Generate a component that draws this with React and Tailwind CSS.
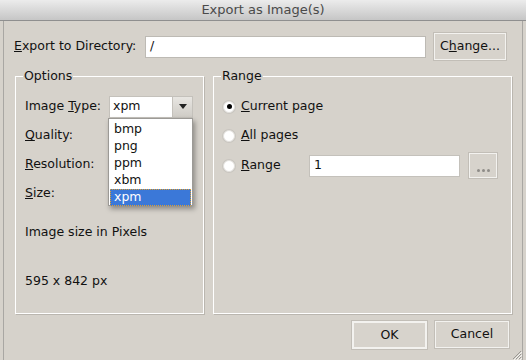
import React from 'react';

const btn =
  'flex items-center justify-center border border-[#f3f2ef] bg-[#d7d3cc] shadow-[0_0_0_1px_#c2beb7]';

function Radio({ checked, children }) {
  return (
    <div className="flex items-center h-[29px]">
      <span className="w-[12px] h-[12px] rounded-full bg-white border border-[#e3e1dd] shadow-[0_0_0_1px_#c9c6c0] flex items-center justify-center">
        {checked && <span className="w-[5px] h-[5px] rounded-full bg-black" />}
      </span>
      <span className="ml-[6px]">{children}</span>
    </div>
  );
}

export default function App() {
  return (
    <div
      className="w-[526px] h-[360px] overflow-hidden bg-[#d6d2cb] flex flex-col text-[12.5px] text-[#111]"
      style={{ fontFamily: '"DejaVu Sans", Verdana, sans-serif' }}
    >
      <div className="h-[21px] shrink-0 flex items-center justify-center bg-gradient-to-b from-[#ececec] to-[#c6c6c6] border-b border-[#8f8f8f] text-[13px] text-[#4a4a4a]">
        Export as Image(s)
      </div>

      <div className="flex-1 mx-[3px] border-x border-[#a9a7a3] flex flex-col relative">
        {/* directory row */}
        <div className="flex items-center mt-[12px] pl-[10px] pr-[16px] h-[27px]">
          <span className="w-[123px]">
            <u>E</u>xport to Directory:
          </span>
          <div className="ml-[8px] w-[281px] h-[22px] bg-white border border-[#bdbab4] flex items-center px-[4px]">
            /
          </div>
          <div className={`${btn} ml-[8px] w-[72px] h-[27px]`}>
            C<u>h</u>ange...
          </div>
        </div>

        {/* option groups */}
        <div className="flex mt-[8px] ml-[11px] gap-[9px] h-[246px]">
          <fieldset className="w-[189px] border border-white shadow-[1px_1px_0_#bab6af] pl-[9px]">
            <legend className="px-[1px] -ml-[2px] leading-[16px]">Options</legend>
            <div className="flex flex-col mt-[8px]">
              <div className="flex items-center h-[29px]">
                <span className="w-[84px]">
                  Image <u>T</u>ype:
                </span>
                <div className="relative">
                  <div className="w-[84px] h-[22px] bg-white border border-[#c4c1bb] flex items-center">
                    <span className="flex-1 pl-[3px]">xpm</span>
                    <div className="w-[20px] h-full bg-gradient-to-b from-[#e8e6e2] to-[#cfccc6] border-l border-[#c4c1bb] flex items-center justify-center">
                      <svg width="8" height="5" viewBox="0 0 8 5">
                        <path d="M0 0h8L4 5z" fill="#222" />
                      </svg>
                    </div>
                  </div>
                  <div className="absolute left-[-1px] top-[22px] w-[85px] h-[88px] bg-white border border-[#9c9a96] shadow-[2px_3px_5px_rgba(0,0,0,0.35)] pt-[2px] px-[1px] z-10">
                    {['bmp', 'png', 'ppm', 'xbm'].map((t) => (
                      <div key={t} className="h-[17px] flex items-center pl-[4px]">
                        {t}
                      </div>
                    ))}
                    <div className="h-[17px] flex items-center pl-[4px] bg-[#3b78d8] text-white outline-1 outline-dotted outline-[#e0a030] -outline-offset-1">
                      xpm
                    </div>
                  </div>
                </div>
              </div>
              <div className="flex items-center h-[29px]">
                <u>Q</u>uality:
              </div>
              <div className="flex items-center h-[29px]">
                <span>
                  <u>R</u>esolution:
                </span>
              </div>
              <div className="flex items-center h-[29px]">
                <span>
                  <u>S</u>ize:
                </span>
              </div>
              <div className="mt-[16px] leading-[16px]">Image size in Pixels</div>
              <div className="mt-[33px] leading-[16px]">595 x 842 px</div>
            </div>
          </fieldset>

          <fieldset className="w-[299px] border border-white shadow-[1px_1px_0_#bab6af] pl-[9px]">
            <legend className="px-[1px] -ml-[2px] leading-[16px]">Range</legend>
            <div className="flex flex-col mt-[8px]">
              <Radio checked>
                <u>C</u>urrent page
              </Radio>
              <Radio>
                <u>A</u>ll pages
              </Radio>
              <div className="flex items-center h-[31px]">
                <div className="w-[86px]">
                  <Radio>
                    <u>R</u>ange
                  </Radio>
                </div>
                <div className="w-[151px] h-[22px] bg-white border border-[#c4c1bb] flex items-center px-[4px]">
                  1
                </div>
                <div className="ml-[9px] w-[28px] h-[25px] border border-[#f3f2ef] bg-[#d7d3cc] shadow-[0_0_0_1px_#c2beb7] flex items-end justify-center gap-[2px] pb-[5px]">
                  <span className="w-[3px] h-[3px] rounded-full bg-[#8e8c88]" />
                  <span className="w-[3px] h-[3px] rounded-full bg-[#8e8c88]" />
                  <span className="w-[3px] h-[3px] rounded-full bg-[#8e8c88]" />
                </div>
              </div>
            </div>
          </fieldset>
        </div>

        {/* buttons */}
        <div className="flex justify-end gap-[8px] mt-[7px] pr-[13px]">
          <div className={`${btn} w-[75px] h-[28px] border-2`}>OK</div>
          <div className={`${btn} w-[74px] h-[27px]`}>Cancel</div>
        </div>

        <svg className="absolute right-0 bottom-0" width="12" height="12" viewBox="0 0 12 12">
          <path d="M11 3L3 11M11 6L6 11M11 9L9 11" stroke="#9a9893" strokeWidth="1" />
          <path d="M12 4L4 12M12 7L7 12M12 10L10 12" stroke="#f4f3f0" strokeWidth="1" />
        </svg>
      </div>
    </div>
  );
}
